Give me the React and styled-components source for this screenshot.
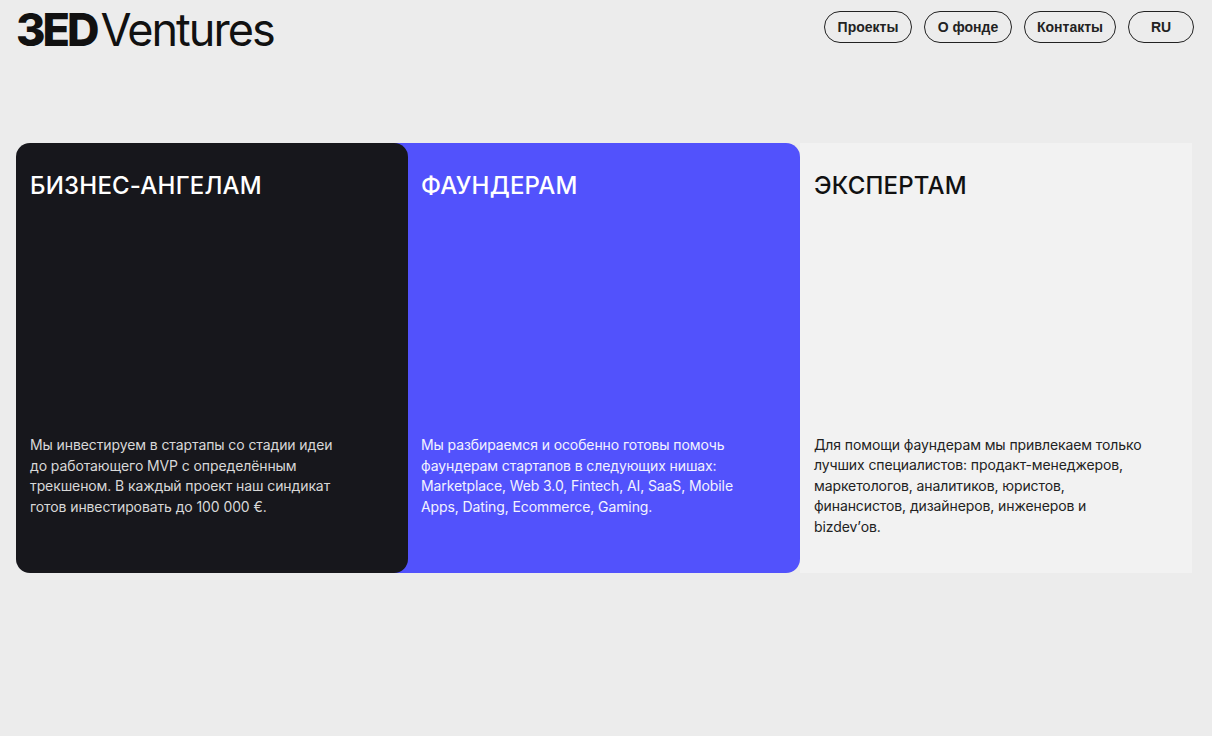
import React from "react";
import styled, { createGlobalStyle } from "styled-components";

const G = createGlobalStyle`
  body { margin:0; background:#ececec; font-family: Inter, "Liberation Sans", sans-serif; }
`;
const Page = styled.div`height:736px; padding:0 17px 0 16px; box-sizing:border-box;`;
const Header = styled.header`display:flex; justify-content:space-between; align-items:flex-start; height:143px;`;
const Logo = styled.div`font-size:45px; letter-spacing:-2px; color:#111; line-height:1; margin-top:7px;
  b{font-weight:800; letter-spacing:-3px;} span{font-weight:400; margin-left:4px;}`;
const Nav = styled.nav`display:flex; gap:12px; margin-top:11px; margin-right:1px;`;
const Btn = styled.div`height:32px; box-sizing:border-box; border:1px solid #222; border-radius:16px;
  padding:0 12px; min-width:${p=>p.w||0}px; display:flex; align-items:center; justify-content:center;
  font-family:"Liberation Sans", Arial, sans-serif; font-weight:700; font-size:14px; color:#222;`;
const Row = styled.div`display:flex;`;
const Card = styled.div`width:${p=>p.w}px; height:430px; box-sizing:border-box; background:${p=>p.bg};
  color:${p=>p.fg}; border-radius:${p=>p.r}; padding:28px 14px 0 ${p=>p.pl}px;
  margin-left:${p=>p.ml}px; position:relative; z-index:${p=>p.z}; display:flex; flex-direction:column; justify-content:space-between;`;
const Title = styled.h2`margin:0; font-weight:500; font-size:24px; letter-spacing:0.2px; line-height:30px;`;
const Body = styled.p`margin:0 0 56px; font-size:14px; line-height:20.5px; max-width:${p=>p.mw}px; color:${p=>p.c}; letter-spacing:-0.1px;`;

export default function App(){
  return <Page><G/>
    <Header>
      <Logo><b>3ED</b><span>Ventures</span></Logo>
      <Nav>
        <Btn w={88}>Проекты</Btn><Btn w={88}>О фонде</Btn><Btn w={88}>Контакты</Btn><Btn w={66}>RU</Btn>
      </Nav>
    </Header>
    <Row>
      <Card w={392} bg="#17171c" fg="#fff" r="14px" pl={14} ml={0} z={3}>
        <Title>БИЗНЕС-АНГЕЛАМ</Title>
        <Body mw={320} c="#d8d8d8">Мы инвестируем в стартапы со стадии идеи до работающего MVP с определённым трекшеном. В каждый проект наш синдикат готов инвестировать до 100 000 €.</Body>
      </Card>
      <Card w={406} bg="#5252fc" fg="#fff" r="0 14px 14px 0" pl={27} ml={-14} z={2}>
        <Title>ФАУНДЕРАМ</Title>
        <Body mw={320} c="#f2f2ff">Мы разбираемся и особенно готовы помочь фаундерам стартапов в следующих нишах: Marketplace, Web 3.0, Fintech, AI, SaaS, Mobile Apps, Dating, Ecommerce, Gaming.</Body>
      </Card>
      <Card w={392} bg="#f2f2f2" fg="#111" r="0" pl={14} ml={0} z={1}>
        <Title>ЭКСПЕРТАМ</Title>
        <Body mw={340} c="#222" style={{marginBottom:36}}>Для помощи фаундерам мы привлекаем только лучших специалистов: продакт-менеджеров, маркетологов, аналитиков, юристов, финансистов, дизайнеров, инженеров и bizdev’ов.</Body>
      </Card>
    </Row>
  </Page>;
}
